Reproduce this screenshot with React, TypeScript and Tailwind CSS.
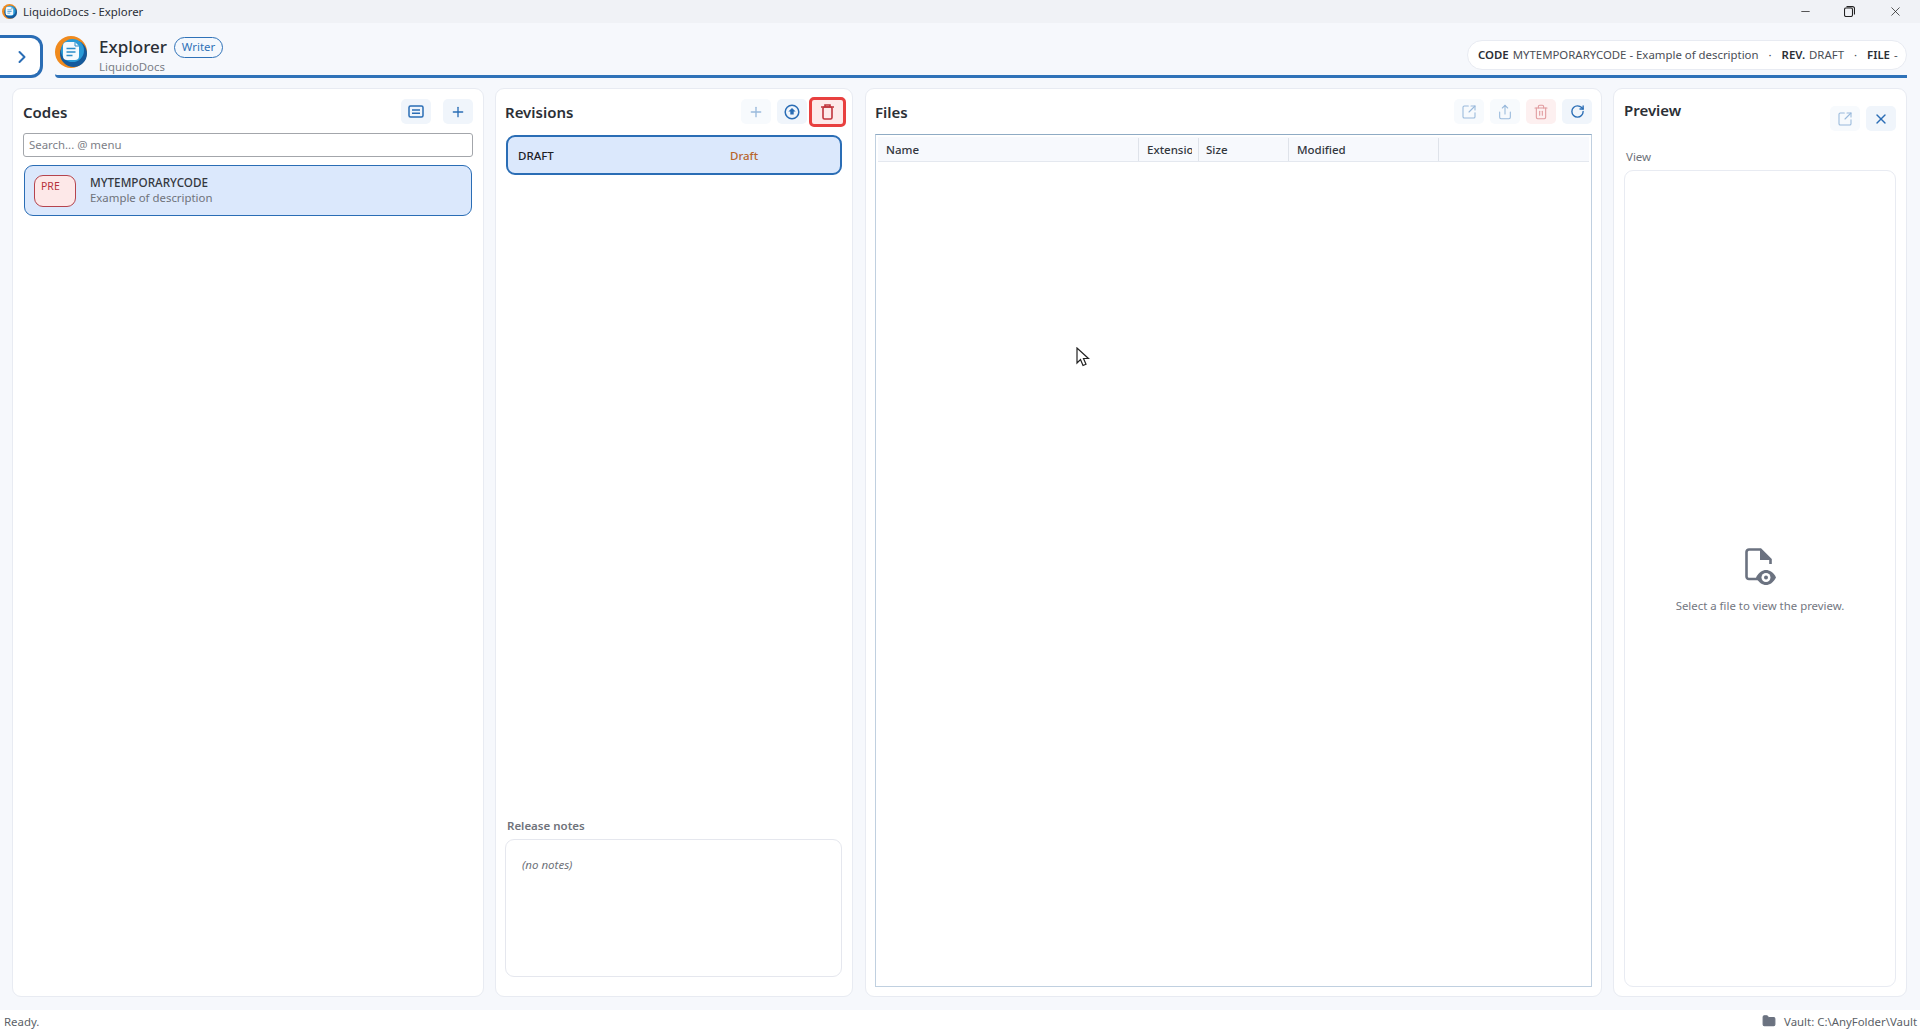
import { Plus, SquareArrowOutUpRight, Share, Trash2, RotateCw, X, ChevronRight, Minus, Folder } from "lucide-react";
import type { ReactNode } from "react";

function Logo({ size }: { size: number }) {
  return (
    <svg width={size} height={size} viewBox="0 0 32 32">
      <circle cx="16" cy="16" r="16" fill="#f08a1d" />
      <circle cx="18.500" cy="17.500" r="13.500" fill="#155a9c" />
      <circle cx="17.500" cy="14.500" r="11.500" fill="#2a9ad6" />
      <path d="M12 6h8l4 4v10a4 4 0 0 1-4 4h-8a4 4 0 0 1-4-4V10a4 4 0 0 1 4-4z" fill="#f4f9fd" />
      <path d="M20 6v4h4" fill="none" stroke="#2a8cc8" strokeWidth="1" />
      <path d="M11.500 12.500h9M11.500 16h9M11.500 19.500h6" stroke="#2a8cc8" strokeWidth="1.500" />
    </svg>
  );
}

function IconBtn({ children, dim, red }: { children: ReactNode; dim?: boolean; red?: boolean }) {
  return (
    <div
      className={`w-[30px] h-[25px] rounded-[5px] flex items-center justify-center ${
        red ? "bg-[#fdf0f0] text-[#c0343c]" : "bg-[#f0f5fb] text-[#2a6db5]"
      } ${dim ? "[&>*]:opacity-45 bg-[#f7fafd]" : ""}`}
    >
      {children}
    </div>
  );
}

function Card({ children, className }: { children: ReactNode; className: string }) {
  return (
    <section className={`bg-white border border-[#e8ebf2] rounded-[9px] flex flex-col ${className}`}>{children}</section>
  );
}

function Title({ children }: { children: ReactNode }) {
  return <h2 className="pt-[2px] text-[15px] font-semibold text-[#2b2f36]">{children}</h2>;
}

function CodesPanel() {
  return (
    <Card className="w-[472px] px-[10px]">
      <div className="flex items-center justify-between h-[25px] mt-[10px]">
        <Title>Codes</Title>
        <div className="flex gap-3">
          <IconBtn>
            <svg width="16" height="14" viewBox="0 0 16 14" fill="none" stroke="currentColor" strokeWidth="1.5">
              <rect x="1" y="1" width="14" height="11" rx="1.5" />
              <path d="M4 5h8M4 8.2h8" />
            </svg>
          </IconBtn>
          <IconBtn>
            <Plus size={16} strokeWidth={2} />
          </IconBtn>
        </div>
      </div>
      <div className="mt-[9px] h-[24px] border border-[#a3a6ab] rounded-[3px] px-[5px] flex items-center text-[11.4px] text-[#7d8087]">
        Search... @ menu
      </div>
      <div className="mt-[8px] mx-px h-[51px] bg-[#dbe8fc] border-[1.5px] border-[#2a6db5] rounded-[9px] flex items-center pl-[9px]">
        <div className="w-[42px] h-[32px] bg-[#fde8e8] border border-[#b5444e] rounded-[9px] pl-[6px] text-[10.5px] leading-[20px] text-[#b5323c]">
          PRE
        </div>
        <div className="ml-[14px] pb-[2px]">
          <div className="text-[11.7px] leading-[16px] font-medium text-[#33373e]">MYTEMPORARYCODE</div>
          <div className="text-[11.4px] leading-[16px] text-[#6f737b]">Example of description</div>
        </div>
      </div>
    </Card>
  );
}

function RevisionsPanel() {
  return (
    <Card className="w-[358px] pl-[9px] pr-[10px] pb-[19px]">
      <div className="flex items-center justify-between h-[25px] mt-[10px]">
        <Title>Revisions</Title>
        <div className="flex items-center gap-[6px] mr-[-4px]">
          <IconBtn dim>
            <Plus size={16} strokeWidth={2} />
          </IconBtn>
          <IconBtn>
            <svg width="16" height="16" viewBox="0 0 16 16">
              <circle cx="8" cy="8" r="6.8" fill="none" stroke="currentColor" strokeWidth="1.5" />
              <path d="M8 4l3.600 3.600H9.700v3H6.300v-3H4.400z" fill="currentColor" />
            </svg>
          </IconBtn>
          <div className="w-[37px] h-[30px] -ml-[4px] bg-[#fdeaea] border-[3px] border-[#e8403f] rounded-[5px] flex items-center justify-center text-[#c0343c]">
            <svg width="13" height="16" viewBox="0 0 13 16" fill="none" stroke="currentColor" strokeWidth="1.6">
              <path d="M0 3h13M4 3V1h5v2" />
              <rect x="2" y="3" width="9" height="12" rx="1.5" />
            </svg>
          </div>
        </div>
      </div>
      <div className="mt-[11px] h-[40px] ml-[1px] bg-[#dbe8fc] border-[2px] border-[#2a6db5] rounded-[9px] flex items-center pl-[10px] pt-px text-[11.5px]">
        <span className="w-[212px] font-medium text-[#1d2026]">DRAFT</span>
        <span className="font-medium text-[#b8652c]">Draft</span>
      </div>
      <div className="flex-1" />
      <div className="text-[11.5px] font-semibold text-[#6f737b] ml-[2px] leading-[16px]">Release notes</div>
      <div className="mt-[5px] h-[138px] border border-[#e5e7ee] rounded-[9px] pl-[16px] pt-[17px] text-[11.5px] leading-[16px] italic text-[#6f737b]">
        (no notes)
      </div>
    </Card>
  );
}

function FilesPanel() {
  const cols = [
    { name: "Name", w: "w-[261px]", pl: "pl-[8px]" },
    { name: "Extension", w: "w-[60px]", pl: "pl-[8px] pr-[6px]" },
    { name: "Size", w: "w-[90px]", pl: "pl-[7px]" },
    { name: "Modified", w: "w-[150px]", pl: "pl-[8px]" },
  ];
  return (
    <Card className="w-[737px] ml-px px-[9px] pb-[9px]">
      <div className="flex items-center justify-between h-[25px] mt-[10px]">
        <Title>Files</Title>
        <div className="flex gap-[6px]">
          <IconBtn dim>
            <SquareArrowOutUpRight size={16} strokeWidth={1.6} />
          </IconBtn>
          <IconBtn dim>
            <Share size={16} strokeWidth={1.6} />
          </IconBtn>
          <IconBtn dim red>
            <Trash2 size={16} strokeWidth={1.6} />
          </IconBtn>
          <IconBtn>
            <RotateCw size={15} strokeWidth={2.2} />
          </IconBtn>
        </div>
      </div>
      <div className="mt-[10px] flex-1 border border-[#c0d0e0] border-t-[#8fabc4] p-[2px]">
        <div className="flex h-[25px] pt-px bg-[#f7f9fd] border-b border-[#e4e8ef] text-[11.5px] text-[#33373e] font-medium">
          {cols.map((c) => (
            <div key={c.name} className={`${c.w} ${c.pl} border-r border-[#dfe3ea] flex items-center`}>
              <span className="overflow-hidden whitespace-nowrap">{c.name}</span>
            </div>
          ))}
        </div>
      </div>
    </Card>
  );
}

function PreviewPanel() {
  return (
    <Card className="w-[294px] px-[10px] pb-[9px]">
      <div className="mt-[8px] h-[22px] leading-[22px]">
        <Title>Preview</Title>
      </div>
      <div className="flex justify-end gap-[6px] -mt-[13px]">
        <IconBtn dim>
          <SquareArrowOutUpRight size={16} strokeWidth={1.6} />
        </IconBtn>
        <IconBtn>
          <X size={16} strokeWidth={2} />
        </IconBtn>
      </div>
      <div className="mt-[18px] ml-[2px] text-[11.5px] leading-[16px] text-[#6f737b]">View</div>
      <div className="mt-[5px] flex-1 border border-[#e8ebf2] rounded-[9px] flex flex-col items-center justify-center pt-[6px]">
        <svg width="34" height="38" viewBox="0 0 34 38" fill="none">
          <path d="M17 31H6a2.500 2.500 0 0 1-2.500-2.500V4A2.500 2.500 0 0 1 6 1.500h11.500l10 10V16" stroke="#6b7280" strokeWidth="2.600" />
          <path d="M17 1.500v10.500h10.500z" fill="#6b7280" />
          <path d="M13 29.500c3-5.500 6.500-7.500 10-7.500s7.500 2 10 7.500c-2.500 5-6.500 7.500-10 7.500s-7.500-2.500-10-7.500z" fill="#6b7280" />
          <circle cx="23" cy="29.500" r="4.500" fill="#fff" />
          <circle cx="23" cy="29.500" r="2" fill="#6b7280" />
        </svg>
        <p className="mt-[11px] text-[11.4px] text-[#73777f]">Select a file to view the preview.</p>
      </div>
    </Card>
  );
}

export default function App() {
  return (
    <div
      className="relative h-screen flex flex-col bg-[#f6f8fc] overflow-hidden"
      style={{ fontFamily: '"Noto Sans", "Open Sans", sans-serif' }}
    >
      {/* window title bar */}
      <div className="h-[23px] shrink-0 bg-[#f0f2f6] flex items-center text-[11.4px] text-[#2b2f36]">
        <div className="ml-[2px] mr-[6px] flex">
          <Logo size={15} />
        </div>
        <span>LiquidoDocs - Explorer</span>
        <div className="ml-auto flex items-center text-[#222]">
          <div className="w-[45px] flex justify-center">
            <Minus size={13} strokeWidth={1.4} />
          </div>
          <div className="w-[45px] flex justify-center pr-[2px]">
            <svg width="11" height="11" viewBox="0 0 11 11" fill="none" stroke="currentColor" strokeWidth="1.1">
              <rect x="0.500" y="2" width="8" height="8.500" rx="1.500" />
              <path d="M2.500 0.600H8.500A2 2 0 0 1 10.500 2.600V8.500" />
            </svg>
          </div>
          <div className="w-[45px] mr-[2px] flex justify-center">
            <X size={15} strokeWidth={1.2} />
          </div>
        </div>
      </div>

      {/* app header */}
      <header className="h-[55px] shrink-0 flex items-end">
        <div className="w-[43px] h-[43px] pl-[3px] bg-white border-[3px] border-l-0 border-[#2a6db5] rounded-r-[12px] flex items-center justify-center text-[#2a6db5]">
          <ChevronRight size={20} strokeWidth={2.4} />
        </div>
        <div className="ml-[12px] mr-[13px] flex-1 h-[52px] border-b-[3px] border-[#2f72b8] rounded-bl-[4px] flex items-start relative">
          <div className="mt-[10px]">
            <Logo size={32} />
          </div>
          <div className="ml-[12px] mt-[9px]">
            <div className="flex items-center">
              <span className="text-[17px] leading-[24px] font-medium text-[#2b2f36]">Explorer</span>
              <span className="ml-[7px] h-[21px] w-[49px] rounded-full border border-[#2f72b8] bg-[#f4f8fd] text-[11.4px] text-[#2f72b8] flex items-center justify-center">
                Writer
              </span>
            </div>
            <div className="text-[11.4px] leading-[14px] mt-[1px] text-[#7a7e86]">LiquidoDocs</div>
          </div>
          <div className="ml-auto mt-[14px] h-[30px] w-[440px] bg-white border border-[#e8ebf2] rounded-full flex items-center pl-[10px] text-[11.4px] text-[#4a4e56] whitespace-nowrap">
            <b className="font-semibold text-[#2b2f36]">CODE</b>
            <span className="ml-1">MYTEMPORARYCODE - Example of description</span>
            <span className="mx-[10px]">·</span>
            <b className="font-semibold text-[#2b2f36]">REV.</b>
            <span className="ml-1">DRAFT</span>
            <span className="mx-[10px]">·</span>
            <b className="font-semibold text-[#2b2f36]">FILE</b>
            <span className="ml-1">-</span>
          </div>
        </div>
      </header>

      {/* panels */}
      <main className="flex-1 min-h-0 flex gap-x-[11px] pl-3 pt-[10px] pb-[13px]">
        <CodesPanel />
        <RevisionsPanel />
        <FilesPanel />
        <PreviewPanel />
      </main>

      {/* status bar */}
      <footer className="h-[22px] shrink-0 pt-px bg-white flex items-center justify-between pl-[4px] pr-[3px] text-[11.4px] text-[#5b5f67]">
        <span>Ready.</span>
        <span className="flex items-center gap-[8px]">
          <Folder size={14} fill="#6b7280" stroke="#6b7280" />
          Vault: C:\AnyFolder\Vault
        </span>
      </footer>

      {/* mouse pointer from the capture */}
      <svg className="absolute left-[1076px] top-[347px]" width="14" height="21" viewBox="0 0 14 21">
        <path d="M1 1v15l3.500-3.500 2.500 6 3-1.300-2.500-5.700h5z" fill="#fff" stroke="#222" strokeWidth="1.200" />
      </svg>
    </div>
  );
}
